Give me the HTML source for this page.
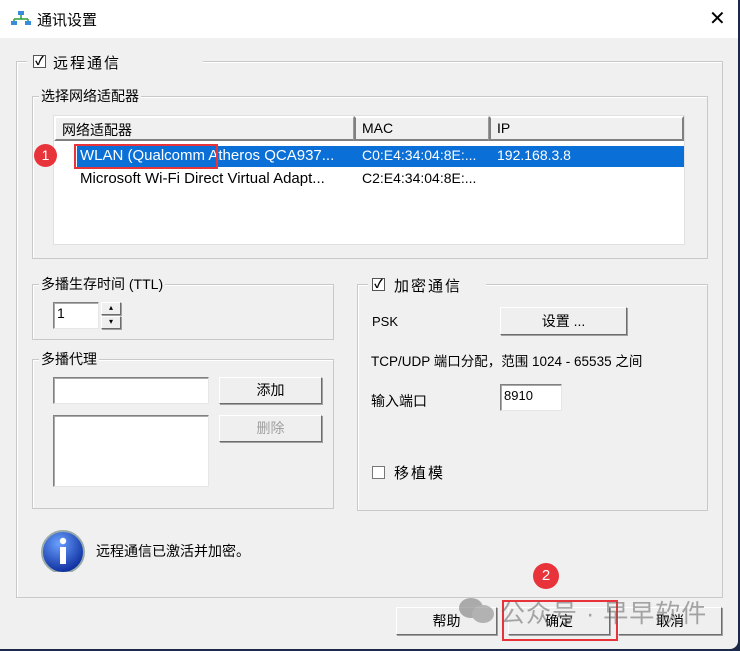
<!DOCTYPE html>
<html><head><meta charset="utf-8"><style>
*{margin:0;padding:0;box-sizing:border-box}
body{width:740px;height:651px;background:#1c2a4a;position:relative;overflow:hidden;font-family:"Liberation Sans","Noto Sans CJK SC",sans-serif;font-size:13px;color:#000}
.a{position:absolute}
.win{left:0;top:0;width:738px;height:649px;background:#f0f0f0;border-radius:0 0 8px 0}
.title{left:0;top:0;width:738px;height:38px;background:#fff}
.grp{position:absolute;border:1px solid #c9c9c9;box-shadow:inset 1px 1px 0 #fff}
.lbl{position:absolute;background:#f0f0f0;padding:0 2px;font-size:14px;line-height:16px}
.btn{position:absolute;background:#efefef;border:1px solid;border-color:#fff #6d6d6d #6d6d6d #fff;box-shadow:1px 1px 0 #a0a0a0;text-align:center;font-size:14px}
.edit{position:absolute;background:#fff;border:1px solid;border-color:#808080 #e6e6e6 #e6e6e6 #808080;box-shadow:inset 1px 1px 0 #a9a9a9}
.cb{position:absolute;width:13px;height:13px;background:#fff;border:1px solid #555;font-size:12px;line-height:11px;text-align:center;font-weight:bold}
</style></head><body>
<div class="a win"></div>
<div class="a title"></div>
<svg class="a" style="left:11px;top:10px" width="20" height="16" viewBox="0 0 20 16"><rect x="7" y="1" width="6" height="4" fill="#3a8bd8"/><path d="M10 5v4M3 9h14M3 9v2M17 9v2" stroke="#2e9e3a" stroke-width="1.5" fill="none"/><rect x="0" y="11" width="6" height="4" fill="#3a8bd8"/><rect x="14" y="11" width="6" height="4" fill="#3a8bd8"/></svg>
<div class="a" style="left:37px;top:9px;font-size:15px">通讯设置</div>
<div class="a" style="left:709px;top:6px;font-size:20px;font-weight:300">✕</div>

<div class="grp" style="left:16px;top:61px;width:707px;height:537px"></div>
<div class="lbl" style="left:27px;top:53px;width:176px;height:18px"></div>
<div class="cb" style="left:33px;top:55px">✓</div>
<div class="a" style="left:53px;top:52px;font-size:15px;letter-spacing:2px">远程通信</div>

<div class="grp" style="left:32px;top:96px;width:676px;height:163px"></div>
<div class="lbl" style="left:39px;top:88px;font-size:14px">选择网络适配器</div>
<div class="a" style="left:53px;top:115px;width:632px;height:130px;background:#fff;border:1px solid #e0e0e0"></div>
<div class="a" style="left:54px;top:116px;width:300px;height:25px;background:#f0f0f0;border:2px solid #808080;border-top-color:#fff;border-left-color:#fff;border-right:1px solid #999"></div>
<div class="a" style="left:354px;top:116px;width:135px;height:25px;background:#f0f0f0;border:2px solid #808080;border-top-color:#fff;border-right:1px solid #999"></div>
<div class="a" style="left:489px;top:116px;width:195px;height:25px;background:#f0f0f0;border:2px solid #808080;border-top-color:#fff"></div>
<div class="a" style="left:62px;top:120px;font-size:14px">网络适配器</div>
<div class="a" style="left:362px;top:120px;font-size:14px">MAC</div>
<div class="a" style="left:497px;top:120px;font-size:14px">IP</div>
<div class="a" style="left:77px;top:146px;width:607px;height:21px;background:#0a6fd6"></div>
<div class="a" style="left:80px;top:147px;font-size:15px;color:#fff;white-space:nowrap">WLAN (Qualcomm Atheros QCA937...</div>
<div class="a" style="left:362px;top:147px;font-size:14px;color:#fff">C0:E4:34:04:8E:...</div>
<div class="a" style="left:497px;top:147px;font-size:14px;color:#fff">192.168.3.8</div>
<div class="a" style="left:80px;top:170px;font-size:15px;white-space:nowrap">Microsoft Wi-Fi Direct Virtual Adapt...</div>
<div class="a" style="left:362px;top:170px;font-size:14px">C2:E4:34:04:8E:...</div>
<div class="a" style="left:74px;top:144px;width:144px;height:25px;border:2px solid #e8333a"></div>
<div class="a" style="left:34px;top:144px;width:23px;height:23px;border-radius:50%;background:#e8333a;color:#fff;text-align:center;line-height:23px;font-size:14px">1</div>

<div class="grp" style="left:32px;top:284px;width:302px;height:56px"></div>
<div class="lbl" style="left:39px;top:276px">多播生存时间 (TTL)</div>
<div class="edit" style="left:53px;top:302px;width:46px;height:27px;padding:2px 3px;font-size:14px">1</div>
<div class="btn" style="left:101px;top:302px;width:20px;height:13px;font-size:8px;line-height:10px">▴</div>
<div class="btn" style="left:101px;top:316px;width:20px;height:13px;font-size:8px;line-height:10px">▾</div>

<div class="grp" style="left:32px;top:359px;width:302px;height:150px"></div>
<div class="lbl" style="left:39px;top:351px">多播代理</div>
<div class="edit" style="left:53px;top:377px;width:156px;height:27px"></div>
<div class="edit" style="left:53px;top:415px;width:156px;height:72px"></div>
<div class="btn" style="left:219px;top:377px;width:103px;height:27px;line-height:25px">添加</div>
<div class="btn" style="left:219px;top:415px;width:103px;height:27px;line-height:25px;color:#a0a0a0">删除</div>

<div class="grp" style="left:357px;top:284px;width:351px;height:227px"></div>
<div class="lbl" style="left:368px;top:276px;width:118px;height:18px"></div>
<div class="cb" style="left:372px;top:278px">✓</div>
<div class="a" style="left:394px;top:275px;font-size:15px;letter-spacing:2px">加密通信</div>
<div class="a" style="left:372px;top:314px">PSK</div>
<div class="btn" style="left:500px;top:307px;width:127px;height:28px;line-height:26px">设置 ...</div>
<div class="a" style="left:371px;top:350px;font-size:13.5px;white-space:nowrap">TCP/UDP 端口分配，范围 1024 - 65535 之间</div>
<div class="a" style="left:371px;top:391px;font-size:14px">输入端口</div>
<div class="edit" style="left:500px;top:384px;width:62px;height:27px;padding:3px 3px;font-size:13px">8910</div>
<div class="cb" style="left:372px;top:466px;border-color:#777"></div>
<div class="a" style="left:394px;top:462px;font-size:15px;letter-spacing:2px">移植模</div>

<svg class="a" style="left:39px;top:530px" width="48" height="42" viewBox="0 0 48 42"><defs><radialGradient id="g" cx="40%" cy="30%" r="70%"><stop offset="0" stop-color="#6aa0ff"/><stop offset="1" stop-color="#0d2e9e"/></radialGradient></defs><circle cx="24" cy="22" r="21" fill="url(#g)" stroke="#9aa" stroke-width="2"/><circle cx="24" cy="11" r="3.2" fill="#fff"/><rect x="21" y="17" width="6" height="17" fill="#fff"/></svg>
<div class="a" style="left:96px;top:541px;font-size:14px">远程通信已激活并加密。</div>

<div class="btn" style="left:396px;top:607px;width:101px;height:28px;line-height:26px">帮助</div>
<div class="btn" style="left:508px;top:607px;width:102px;height:28px;line-height:26px">确定</div>
<div class="btn" style="left:618px;top:607px;width:104px;height:28px;line-height:26px">取消</div>
<div class="a" style="left:502px;top:600px;width:116px;height:41px;border:2px solid #e8333a"></div>
<div class="a" style="left:533px;top:563px;width:26px;height:26px;border-radius:50%;background:#e8333a;color:#fff;text-align:center;line-height:26px;font-size:15px">2</div>
<div class="a" style="left:455px;top:596px;width:48px;height:30px;opacity:.5"><svg width="48" height="30"><ellipse cx="16" cy="12" rx="12" ry="10" fill="#666"/><ellipse cx="28" cy="18" rx="11" ry="9" fill="#777"/></svg></div>
<div class="a" style="left:500px;top:594px;font-size:25px;color:rgba(100,100,100,.55);white-space:nowrap;letter-spacing:1px">公众号 · 早早软件</div>
</body></html>
